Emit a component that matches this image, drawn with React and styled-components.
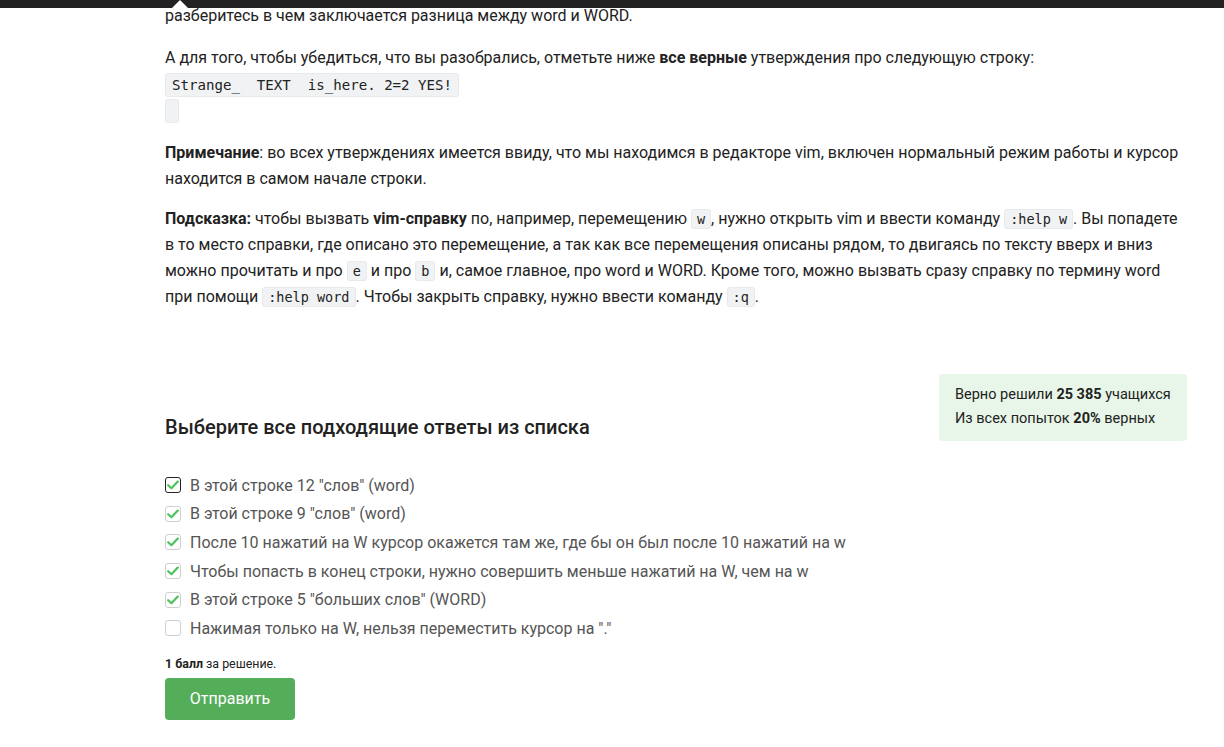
import React from 'react';
import styled, { createGlobalStyle } from 'styled-components';

const GlobalStyle = createGlobalStyle`
  html, body {
    margin: 0;
    padding: 0;
    background: #fff;
  }
  body {
    font-family: Roboto, 'Liberation Sans', sans-serif;
    color: #222;
  }
`;

const TopBar = styled.div`
  position: fixed;
  top: 0;
  left: 0;
  right: 0;
  height: 8px;
  background: #222;
  z-index: 2;

  &::after {
    content: '';
    position: absolute;
    left: 172px;
    bottom: 0;
    border-left: 8px solid transparent;
    border-right: 8px solid transparent;
    border-bottom: 8px solid #fff;
  }
`;

const Page = styled.main`
  width: 1022px;
  margin: 0 0 0 165px;
  padding-top: 3px;
`;

const Paragraph = styled.p`
  margin: 0 0 ${props => props.$gap ?? 16}px;
  font-size: 16px;
  line-height: 26px;
  color: #222;
`;

const Code = styled.code`
  font-family: 'DejaVu Sans Mono', 'Liberation Mono', monospace;
  font-size: 13.5px;
  background: #f1f2f4;
  border: 1px solid #e7e9ec;
  border-radius: 3px;
  padding: 1px 5px;
  color: #222;
`;

const CodeBlock = styled.div`
  display: flex;
  flex-direction: column;
  align-items: flex-start;
  gap: 2px;
  margin: 2px 0 17px;
`;

const CodeLine = styled.pre`
  margin: 0;
  min-width: 12px;
  height: 24px;
  box-sizing: border-box;
  padding: 0 6px;
  font-family: 'DejaVu Sans Mono', 'Liberation Mono', monospace;
  font-size: 14.1px;
  line-height: 22px;
  background: #f1f2f4;
  border: 1px solid #e7e9ec;
  border-radius: 3px;
  color: #222;
`;

const QuizHead = styled.div`
  display: flex;
  justify-content: space-between;
  align-items: flex-end;
  margin-top: 64px;
`;

const Title = styled.h2`
  margin: 0;
  font-size: 20px;
  line-height: 28px;
  font-weight: 500;
  color: #222;
`;

const Stats = styled.div`
  background: #e8f6e9;
  border-radius: 4px;
  padding: 9px 16px 10px;
  width: 216px;
  font-size: 14.5px;
  line-height: 24px;
  color: #222;
`;

const Options = styled.div`
  display: flex;
  flex-direction: column;
  margin-top: 30px;
`;

const Option = styled.label`
  display: flex;
  align-items: center;
  gap: 9px;
  height: 28.6px;
  font-size: 16px;
  color: #555;
`;

const Box = styled.span`
  width: 16px;
  height: 16px;
  box-sizing: border-box;
  border: 1px solid ${props => (props.$focused ? '#222' : '#cfcfcf')};
  border-radius: 3px;
  background: #fff;
  display: flex;
  align-items: center;
  justify-content: center;
`;

const Score = styled.div`
  margin-top: 13px;
  font-size: 12.4px;
  line-height: 16px;
  color: #222;
`;

const SubmitButton = styled.button`
  margin: 6px 0 30px;
  width: 130px;
  height: 42px;
  border: none;
  border-radius: 4px;
  background: #54ad58;
  color: #fff;
  font-family: Roboto, 'Liberation Sans', sans-serif;
  font-size: 16px;
`;

const Check = () => (
  <svg width="12" height="10" viewBox="0 0 12 10">
    <path d="M1.2 5.2 L4.4 8.2 L10.8 1.6" fill="none" stroke="#4cc25a" strokeWidth="2.2" strokeLinecap="round" strokeLinejoin="round" />
  </svg>
);

const options = [
  { text: 'В этой строке 12 "слов" (word)', checked: true, focused: true },
  { text: 'В этой строке 9 "слов" (word)', checked: true },
  { text: 'После 10 нажатий на W курсор окажется там же, где бы он был после 10 нажатий на w', checked: true },
  { text: 'Чтобы попасть в конец строки, нужно совершить меньше нажатий на W, чем на w', checked: true },
  { text: 'В этой строке 5 "больших слов" (WORD)', checked: true },
  { text: 'Нажимая только на W, нельзя переместить курсор на "."', checked: false },
];

const App = () => (
  <>
    <GlobalStyle />
    <TopBar />
    <Page>
      <Paragraph>разберитесь в чем заключается разница между word и WORD.</Paragraph>
      <Paragraph $gap={0}>
        А для того, чтобы убедиться, что вы разобрались, отметьте ниже <b>все верные</b> утверждения про следующую строку:
      </Paragraph>
      <CodeBlock>
        <CodeLine>Strange_  TEXT  is_here. 2=2 YES!</CodeLine>
        <CodeLine />
      </CodeBlock>
      <Paragraph $gap={14}>
        <b>Примечание</b>: во всех утверждениях имеется ввиду, что мы находимся в редакторе vim, включен нормальный режим работы и курсор находится в самом начале строки.
      </Paragraph>
      <Paragraph>
        <b>Подсказка:</b> чтобы вызвать <b>vim-справку</b> по, например, перемещению <Code>w</Code>, нужно открыть vim и ввести команду <Code>:help w</Code>. Вы попадете в то место справки, где описано это перемещение, а так как все перемещения описаны рядом, то двигаясь по тексту вверх и вниз можно прочитать и про <Code>e</Code> и про <Code>b</Code> и, самое главное, про word и WORD. Кроме того, можно вызвать сразу справку по термину word при помощи <Code>:help word</Code>. Чтобы закрыть справку, нужно ввести команду <Code>:q</Code>.
      </Paragraph>

      <QuizHead>
        <Title>Выберите все подходящие ответы из списка</Title>
        <Stats>
          <div>Верно решили <b>25 385</b> учащихся</div>
          <div>Из всех попыток <b>20%</b> верных</div>
        </Stats>
      </QuizHead>

      <Options>
        {options.map(opt => (
          <Option key={opt.text}>
            <Box $focused={opt.focused}>{opt.checked && <Check />}</Box>
            {opt.text}
          </Option>
        ))}
      </Options>

      <Score><b>1 балл</b> за решение.</Score>
      <SubmitButton>Отправить</SubmitButton>
    </Page>
  </>
);

export default App;
